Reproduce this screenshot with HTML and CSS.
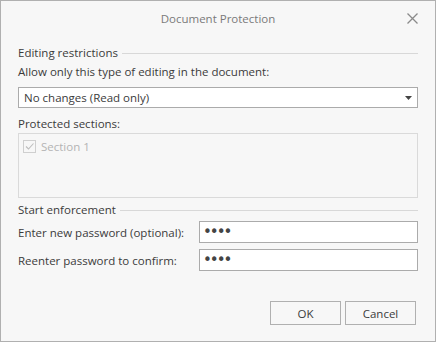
FILE: index.html
```html
<!DOCTYPE html>
<html lang="en">
<head>
    <meta charset="UTF-8">
    <meta name="viewport" content="width=device-width, initial-scale=1.0">
    <title>Document Protection</title>
    <link rel="stylesheet" href="styles.css">
</head>
<body>
    <div class="dialog">
        <div class="dialog-header">
            <span></span>
            <span class="dialog-title">Document Protection</span>
            <button class="close-btn" aria-label="Close">
                <svg width="11" height="11" viewBox="0 0 11 11">
                    <path d="M0.5 0.5 L10.5 10.5 M10.5 0.5 L0.5 10.5" stroke="#8a8a8a" stroke-width="1.3" fill="none"/>
                </svg>
            </button>
        </div>

        <div class="dialog-body">
            <div class="group-title first">
                <span>Editing restrictions</span>
                <div class="group-line"></div>
            </div>
            <div class="label allow-label">Allow only this type of editing in the document:</div>
            <div class="combo">
                <span>No changes (Read only)</span>
                <svg width="7" height="4" viewBox="0 0 7 4">
                    <path d="M0 0 L7 0 L3.5 4 Z" fill="#444"/>
                </svg>
            </div>

            <div class="label sections-label">Protected sections:</div>
            <div class="sections-box">
                <label class="section-item">
                    <span class="checkbox">
                        <svg width="11" height="11" viewBox="0 0 11 11">
                            <path d="M2 5.5 L4.5 8 L9.5 2.5" stroke="#bdbdbd" stroke-width="1.1" fill="none"/>
                        </svg>
                    </span>
                    <span>Section 1</span>
                </label>
            </div>

            <div class="group-title enforce">
                <span>Start enforcement</span>
                <div class="group-line"></div>
            </div>
            <div class="password-grid">
                <label for="pwd1">Enter new password (optional):</label>
                <input type="password" id="pwd1" value="abcd">
                <label for="pwd2">Reenter password to confirm:</label>
                <input type="password" id="pwd2" value="abcd">
            </div>

            <div class="buttons">
                <button class="btn">OK</button>
                <button class="btn">Cancel</button>
            </div>
        </div>
    </div>
</body>
</html>
```

FILE: styles.css
```css
html, body {
    margin: 0;
    padding: 0;
}
body {
    font-family: "Open Sans", "Noto Sans", Arial, sans-serif;
    font-size: 11.5px;
    color: #3b3b3b;
    background-color: #f7f7f7;
}
.dialog {
    width: 436px;
    height: 342px;
    box-sizing: border-box;
    border: 1px solid #b0b0b0;
    background-color: #f7f7f7;
    display: flex;
    flex-direction: column;
}
.dialog-header {
    height: 34px;
    display: grid;
    grid-template-columns: 1fr auto 1fr;
    align-items: center;
}
.dialog-title {
    color: #7a7a7a;
    padding-top: 1px;
}
.close-btn {
    justify-self: end;
    margin-right: 17px;
    padding: 0;
    border: none;
    background: none;
    display: flex;
}
.dialog-body {
    padding: 0 17px;
    display: flex;
    flex-direction: column;
}
.label, .group-title {
    line-height: 16px;
}
.group-title {
    display: flex;
    align-items: center;
}
.group-title.first {
    margin-top: 10px;
}
.group-title.enforce {
    margin-top: 4px;
}
.group-line {
    flex: 1;
    height: 1px;
    margin-left: 4px;
    background-color: #d8d8d8; /* 分组线 */
}
.allow-label {
    margin-top: 3px;
}
.combo {
    margin-top: 7px;
    height: 21px;
    box-sizing: border-box;
    border: 1px solid #ababab;
    background-color: #ffffff;
    display: flex;
    align-items: center;
    justify-content: space-between;
    padding: 0 5px 0 5px;
}
.sections-label {
    margin-top: 8px;
}
.sections-box {
    margin-top: 1px;
    height: 65px;
    box-sizing: border-box;
    border: 1px solid #dadada;
    padding: 5px 4px;
}
.section-item {
    display: flex;
    align-items: center;
    gap: 5px;
    color: #b4b4b4;
}
.checkbox {
    width: 13px;
    height: 13px;
    box-sizing: border-box;
    border: 1px solid #cfcfcf;
    display: flex;
    align-items: center;
    justify-content: center;
}
.password-grid {
    margin-top: 3px;
    display: grid;
    grid-template-columns: 181px 1fr;
    row-gap: 6px;
    align-items: center;
}
.password-grid input {
    height: 22px;
    box-sizing: border-box;
    border: 1px solid #ababab;
    padding: 0 3px;
    background-color: #ffffff;
    color: #444;
    font-family: "DejaVu Sans", sans-serif;
    font-size: 15px;
    letter-spacing: -2px;
    outline: none;
}
.buttons {
    margin-top: 30px;
    display: flex;
    justify-content: flex-end;
    gap: 4px;
    padding-right: 2px;
}
.btn {
    width: 71px;
    height: 24px;
    border: 1px solid #b0b0b0;
    background-color: #f7f7f7;
    color: #3b3b3b;
    font-family: inherit;
    font-size: 11.5px;
    padding: 0;
}
```
